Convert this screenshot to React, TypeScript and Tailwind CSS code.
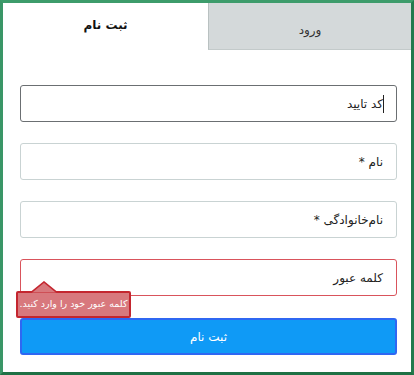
import React from "react";

const font = { fontFamily: '"DejaVu Sans", "Liberation Sans", sans-serif' };

const Field: React.FC<{ label: string; tone?: "focus" | "error" | "plain"; children?: React.ReactNode }> = ({
	label,
	tone = "plain",
	children,
}) => {
	const border =
		tone === "focus" ? "border-[#6b6f72]" : tone === "error" ? "border-[#d9545c]" : "border-[#c9d3d3]";
	return (
		<div className={`relative flex h-[37px] items-center rounded-[3px] border bg-white pr-[13px] ${border}`}>
			<span className="text-[12px] text-[#222]">{label}</span>
			{children}
		</div>
	);
};

export default function App() {
	return (
		<div dir="rtl" style={font} className="h-[375px] w-[414px] bg-white">
			<div className="flex h-full flex-col border-[3px] border-t-[#3d9c6b] border-r-[#237a4d] border-b-[#1f7145] border-l-[#3a9667]">
				{/* tabs */}
				<div className="flex h-[47px]">
					<div className="flex w-[203px] items-center justify-center border-b border-l border-b-[#c3caca] border-l-[#b9c1c1] bg-[#d4d9da] pt-[8px] text-[12px] text-[#333]">
						ورود
					</div>
					<div className="flex flex-1 items-start justify-center pt-[13px] text-[12px] font-bold text-[#111]">ثبت نام</div>
				</div>

				{/* form */}
				<div className="flex flex-col gap-[21px] pt-[35px] pr-[14px] pl-[17px]">
					<Field label="کد تایید" tone="focus">
						<span className="absolute top-[9px] right-[12px] h-[18px] w-px bg-[#222]" />
					</Field>
					<Field label="نام *" />
					<Field label="نام‌خانوادگی *" />
					<div className="relative">
						<Field label="کلمه عبور" tone="error" />
						{/* tooltip */}
						<div className="absolute top-[22px] left-[-4px] z-10">
							<svg width="26" height="12" viewBox="0 0 26 12" className="absolute top-0 left-[15px]">
								<path d="M0 11.5 L13 1 L26 11.5" fill="#d8787d" stroke="#c4262f" strokeWidth="1.6" />
							</svg>
							<div className="mt-[10px] flex h-[27px] w-[115px] items-center justify-center rounded-[2px] border-2 border-[#c4262f] bg-[#d8787d] text-[9.5px] whitespace-nowrap text-white">
								کلمه عبور خود را وارد کنید.
							</div>
						</div>
					</div>
					<button className="mt-[1px] flex h-[37px] items-center justify-center rounded-[3px] border-2 border-[#2f67f2] bg-[#0f9af6] text-[12px] text-white">
						ثبت نام
					</button>
				</div>
			</div>
		</div>
	);
}
